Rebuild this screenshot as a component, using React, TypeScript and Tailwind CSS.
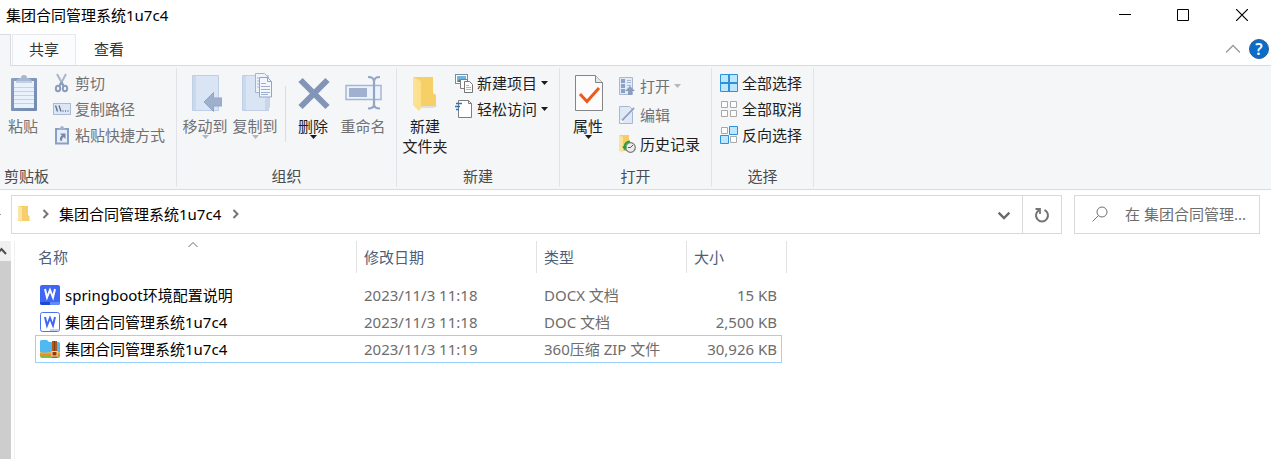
import { clsx } from "clsx"
import type { ReactNode } from "react"

/* ---------- icons ---------- */

function PasteIcon() {
    return (
        <svg width="28" height="40" viewBox="0 0 28 40" fill="none">
            <defs>
                <linearGradient id="board" x1="0" y1="0" x2="1" y2="1">
                    <stop offset="0" stopColor="#8b9fc2" />
                    <stop offset="1" stopColor="#7388b0" />
                </linearGradient>
            </defs>
            <rect x="2" y="6" width="26" height="33" rx="1" fill="url(#board)" />
            <rect x="5" y="9" width="20" height="27" fill="#e9f1fb" />
            <path d="M5 15.500h20M5 19.500h20M5 23.500h20M5 27.500h20M5 31.500h20" stroke="#c3d2e8" />
            <path d="M7 9h16v2H7z" fill="#c3cfe2" />
            <path d="M7 9c1-2 3-3 5-3a3 3 0 1 1 6 0c2 0 4 1 5 3z" fill="#a9b6cf" />
        </svg>
    )
}

function CutIcon() {
    return (
        <svg width="18" height="20" viewBox="0 0 18 20" fill="none">
            <path d="M4 1l6.500 12M13 1L6.500 13" stroke="#a9b5cd" strokeWidth="2" />
            <path d="M8.500 9l2 4M8.500 9l-2 4" stroke="#8b9cbd" strokeWidth="2" />
            <ellipse cx="5" cy="15.500" rx="2.200" ry="2.800" stroke="#8b9cbd" strokeWidth="2" />
            <ellipse cx="12" cy="15.500" rx="2.200" ry="2.800" stroke="#8b9cbd" strokeWidth="2" />
        </svg>
    )
}

function CopyPathIcon() {
    return (
        <svg width="18" height="12" viewBox="0 0 18 12" fill="none">
            <rect x=".5" y=".5" width="17" height="11" fill="#dce7f5" stroke="#a9b9d6" />
            <path d="M2.500 2.500l2 6M6 2.500l2 6" stroke="#5d6f92" strokeWidth="1.300" />
            <path d="M9.500 8h1M12 8h1M14.500 8h1" stroke="#5d6f92" strokeWidth="1.300" />
        </svg>
    )
}

function PasteShortcutIcon() {
    return (
        <svg width="16" height="20" viewBox="0 0 16 20" fill="none">
            <rect x="2" y="4" width="12" height="14.500" fill="#e6eefa" stroke="#8b9fc2" strokeWidth="2" />
            <path d="M4 5c0-2 2-2 2.500-2.500a1.500 1.500 0 0 1 3 0C10 3 12 3 12 5z" fill="#a3b1cb" />
            <path d="M6 8.500h5.500V14l-2-2c-1 .800-1.500 2-1.500 4l-2-.500c-.500-2.500.500-4 1.800-5z" fill="#7488b0" />
        </svg>
    )
}

function MoveToIcon() {
    return (
        <svg width="34" height="40" viewBox="0 0 34 40" fill="none">
            <path d="M4.500 3.500h26v35h-26z" fill="#d9e4f4" stroke="#bfcfe6" />
            <path d="M5 4h3v34H5z" fill="#ccd9ed" />
            <path d="M16 30l9.500-9.500v5.500h8.500v8h-8.500v5.500z" fill="#9fb0cd" stroke="#93a5c5" />
        </svg>
    )
}

function CopyToIcon() {
    return (
        <svg width="34" height="40" viewBox="0 0 34 40" fill="none">
            <path d="M4.500 3.500h26v35h-26z" fill="#d9e4f4" stroke="#bfcfe6" />
            <path d="M5 4h3v34H5z" fill="#ccd9ed" />
            <path d="M27 38V28l2-3h3v10l-2 3z" fill="#c9d6ea" />
            <path d="M17.500 1.500h9l4 4v15h-13z" fill="#eef3fb" stroke="#a3b3d0" />
            <path d="M19 6h3M19 9h3M19 12h3M19 15h3" stroke="#a9b8d3" />
            <path d="M21.500 5.500h8l4 4v15.500h-12z" fill="#f3f7fd" stroke="#93a5c7" />
            <path d="M29.500 5.500v4h4" stroke="#93a5c7" />
            <path d="M23 11.500h5M23 14.500h9M23 17.500h9M23 20.500h9M23 22.500h7" stroke="#9dafcd" />
        </svg>
    )
}

function DeleteIcon() {
    return (
        <svg width="34" height="40" viewBox="0 0 34 40" fill="none">
            <path d="M4.500 8l27 27M31.500 8l-27 27" stroke="#8295b8" strokeWidth="6" />
        </svg>
    )
}

function RenameIcon() {
    return (
        <svg width="38" height="40" viewBox="0 0 38 40" fill="none">
            <rect x="2" y="13.500" width="35" height="14" fill="#edf3fc" stroke="#a5b6d3" strokeWidth="1.500" />
            <rect x="5" y="16" width="18" height="9" fill="#a0b1cf" />
            <path
                d="M24 5c4 0 6 1 6 4.500v23c0 3-2 4-6 4M36 5c-4 0-6 1-6 4.500v23c0 3 2 4 6 4"
                stroke="#93a6c6"
                strokeWidth="2.200"
            />
        </svg>
    )
}

function NewFolderIcon() {
    return (
        <svg width="28" height="40" viewBox="0 0 28 40" fill="none">
            <defs>
                <linearGradient id="flap" x1="0" y1="0" x2="1" y2="0">
                    <stop offset="0" stopColor="#fbe297" />
                    <stop offset="1" stopColor="#fddf86" />
                </linearGradient>
            </defs>
            <path d="M10 34h17l-5 2H10z" fill="#dcdee0" />
            <path d="M3 5h19v16l3 2v11H3z" fill="#f7cf67" />
            <path d="M2 5l8 4v27l-2 3-6-6z" fill="url(#flap)" />
        </svg>
    )
}

function NewItemIcon() {
    return (
        <svg width="18" height="20" viewBox="0 0 18 20" fill="none">
            <rect x=".5" y="1.500" width="12" height="9" fill="#fff" stroke="#7c8b99" />
            <rect x="2" y="3" width="9" height="6" fill="#6db4e2" />
            <path d="M2 9l3-3 4 3z" fill="#3f8a5c" />
            <path d="M5.500 6.500h7v9h-7z" fill="#fff" stroke="#808080" />
            <path d="M9.500 8.500h5l3 3v8h-8z" fill="#fff" stroke="#757575" />
            <path d="M11 12.500h3M11 14.500h5M11 16.500h5" stroke="#dba597" />
        </svg>
    )
}

function EasyAccessIcon() {
    return (
        <svg width="18" height="20" viewBox="0 0 18 20" fill="none">
            <path d="M3.500 1.500h10l3 3v14h-13z" fill="#fff" stroke="#7d7d7d" />
            <path d="M13.500 1.500v3h3" stroke="#7d7d7d" />
            <path d="M1 4.500h6M0 7.500h5M1 10.500h3" stroke="#2f73b8" strokeWidth="1.300" />
        </svg>
    )
}

function PropertiesIcon() {
    return (
        <svg width="30" height="40" viewBox="0 0 30 40" fill="none">
            <path d="M2.500 3.500h20l7 7v28h-27z" fill="#fcfcfc" stroke="#858585" />
            <path d="M22.500 3.500v7h7" fill="#e6e6e6" stroke="#858585" />
            <path d="M7 22l7 7.500L26 16" stroke="#ee5a1c" strokeWidth="3" />
        </svg>
    )
}

function OpenIcon() {
    return (
        <svg width="18" height="20" viewBox="0 0 18 20" fill="none">
            <path d="M1.500 1.500h13v17h-13z" fill="#e1eaf7" stroke="#a9b8d2" />
            <path d="M3 3h4v4H3zM3 8h4v4H3zM3 13h4v4H3z" fill="#8ea1c4" />
            <path d="M9 4.500h4M9 6.500h4M9 9.500h4" stroke="#a9b8d2" />
            <path d="M12 10l5 5h-3v4h-4v-4H7z" fill="#8b9dbf" />
        </svg>
    )
}

function EditIcon() {
    return (
        <svg width="18" height="20" viewBox="0 0 18 20" fill="none">
            <path d="M1.500 1.500h10l3 3v14h-13z" fill="#dfe8f5" stroke="#a9b8d2" />
            <path d="M3 17L14 5" stroke="#fff" strokeWidth="3" />
            <path d="M4 15.500L16 3" stroke="#93a5c5" strokeWidth="2" />
        </svg>
    )
}

function HistoryIcon() {
    return (
        <svg width="18" height="20" viewBox="0 0 18 20" fill="none">
            <path d="M1 1h10v16H1z" fill="#f6cd65" />
            <path d="M1 1l4 2v14l-1 2-3-3z" fill="#fce29a" />
            <circle cx="12.500" cy="13.500" r="4.800" fill="#ececec" stroke="#777" strokeWidth="1.200" />
            <path d="M12.500 13.500L15 11M12.500 13.500H10" stroke="#555" />
            <path d="M12 7.500C9 7.500 6.500 9.500 6.500 13" stroke="#23a03a" strokeWidth="2" />
            <path d="M4 12.500h5l-2 4z" fill="#23a03a" />
        </svg>
    )
}

function SelectAllIcon() {
    return (
        <svg width="18" height="18" viewBox="0 0 18 18" fill="#bfe6ff" stroke="#2e91dc">
            <path d="M.5 .5h8v8h-8zM9.500 .5h8v8h-8zM.5 9.500h8v8h-8zM9.500 9.500h8v8h-8z" />
            <path d="M9 0v18M0 9h18" strokeWidth="2" />
        </svg>
    )
}

function SelectNoneIcon() {
    return (
        <svg width="18" height="18" viewBox="0 0 18 18" fill="#fdfdfd" stroke="#a8a8a8">
            <path d="M1.500 1.500h6v6h-6zM10.500 1.500h6v6h-6zM1.500 10.500h6v6h-6zM10.500 10.500h6v6h-6z" />
        </svg>
    )
}

function InvertIcon() {
    return (
        <svg width="18" height="18" viewBox="0 0 18 18">
            <path d="M1.500 1.500h6v6h-6zM10.500 10.500h6v6h-6z" fill="#fdfdfd" stroke="#a8a8a8" />
            <path d="M9.500 .5h8v8h-8zM.5 9.500h8v8h-8z" fill="#bfe6ff" stroke="#2e91dc" />
        </svg>
    )
}

function DocxIcon() {
    return (
        <svg width="20" height="20" viewBox="0 0 20 20" fill="none">
            <rect width="20" height="20" rx="2" fill="#3f66f4" />
            <path d="M0 17h10v3H2a2 2 0 0 1-2-2z" fill="#1c49d6" />
            <path d="M10 17h10v1a2 2 0 0 1-2 2h-8z" fill="#5f8bff" />
            <path d="M5 4l2 8.500L10 5l3 7.500L15 4" stroke="#fff" strokeWidth="2" />
        </svg>
    )
}

function DocIcon() {
    return (
        <svg width="20" height="20" viewBox="0 0 20 20" fill="none">
            <rect x=".5" y=".5" width="19" height="19" rx="2" fill="#fff" stroke="#4b72ee" />
            <path d="M10 17h9v1a1 1 0 0 1-1 1h-8z" fill="#c3d0f7" />
            <path d="M5 5l2 8.500L10 6l3 7.500L15 5" stroke="#3f66f4" strokeWidth="2" />
        </svg>
    )
}

function ZipIcon() {
    return (
        <svg width="20" height="20" viewBox="0 0 20 20" fill="none">
            <path d="M0 2.500A1.500 1.500 0 0 1 1.500 1H7l2 2h9.500A1.500 1.500 0 0 1 20 4.500V15H0z" fill="#4fb9f2" />
            <path d="M0 13c5 2 12-1 20 0v3H0z" fill="#fbb437" />
            <path d="M0 15.500h20V17a2 2 0 0 1-2 2H2a2 2 0 0 1-2-2z" fill="#7ac143" />
            <path d="M0 14.500h20v2H0z" fill="#f28c1e" />
            <path d="M12 2h5v17h-5z" fill="#b0581b" />
            <path d="M14.500 2v10" stroke="#8a3e0e" />
            <rect x="12" y="12.500" width="5" height="4.500" fill="#8a3e0e" stroke="#f5dca9" />
        </svg>
    )
}

function SmallFolderIcon() {
    return (
        <svg width="14" height="18" viewBox="0 0 14 18" fill="none">
            <path d="M1 1h10v9l1.500 1v5H1z" fill="#f6cf6c" />
            <path d="M1 1l4 1.500V15l-1 2.500L1 15z" fill="#fce5a3" />
        </svg>
    )
}

interface ChevronProps {
    d: string
    size?: number
    color?: string
    width?: number
}

function Chevron({ d, size = 10, color = "#6b6b6b", width = 2 }: ChevronProps) {
    return (
        <svg width={size} height={size} viewBox="0 0 10 10" fill="none" stroke={color} strokeWidth={width} className="shrink-0">
            <path d={d} />
        </svg>
    )
}

function Caret({ muted }: { muted?: boolean }) {
    return (
        <svg width="7" height="4" viewBox="0 0 7 4" className={clsx("shrink-0", muted ? "fill-[#b5b7ba]" : "fill-[#1a1a1a]")}>
            <path d="M0 0h7L3.500 4z" />
        </svg>
    )
}

/* ---------- ribbon ---------- */

interface ButtonProps {
    icon: ReactNode
    label: ReactNode
    disabled?: boolean
    caret?: boolean
}

function BigButton({ icon, label, disabled, caret }: ButtonProps) {
    return (
        <button
            type="button"
            disabled={disabled}
            className={clsx(
                "flex w-[50px] shrink-0 flex-col items-center pt-[2px] leading-5 whitespace-nowrap",
                disabled ? "text-[#707174]" : "text-[#1e1e1e]",
            )}
        >
            <span className="mb-1 flex h-10">{icon}</span>
            <span className="-mb-px">{label}</span>
            {caret && <Caret muted={disabled} />}
        </button>
    )
}

function SmallButton({ icon, label, disabled, caret, tall }: ButtonProps & { tall?: boolean }) {
    return (
        <button
            type="button"
            disabled={disabled}
            className={clsx(
                "flex items-center gap-1 whitespace-nowrap",
                tall ? "h-[29px]" : "h-[26px]",
                disabled ? "text-[#707174]" : "text-[#1e1e1e]",
            )}
        >
            <span className="flex w-[18px] shrink-0 justify-center">{icon}</span>
            <span>{label}</span>
            {caret && <Caret muted={disabled} />}
        </button>
    )
}

function Group({ title, className, children }: { title: string; className: string; children: ReactNode }) {
    return (
        <section
            aria-label={title}
            className={clsx("my-[2px] flex shrink-0 flex-col justify-between border-r border-[#e1e3e6]", className)}
        >
            <div className="flex items-start pt-[2px] pl-[3px]">{children}</div>
            <h2 className="pb-px text-center leading-5 text-[#4a4b4d]">{title}</h2>
        </section>
    )
}

function Ribbon() {
    return (
        <div className="flex h-[124px] border-b border-[#dadbdc] bg-[#f5f6f8]">
            <Group title="剪贴板" className="w-[177px] [&>h2]:pl-1 [&>h2]:text-left">
                {/* the group continues past the left edge of the window */}
                <div className="-ml-[5px] pr-[5px]">
                    <BigButton icon={<PasteIcon />} label="粘贴" disabled />
                </div>
                <div>
                    <SmallButton icon={<CutIcon />} label="剪切" disabled />
                    <SmallButton icon={<CopyPathIcon />} label="复制路径" disabled />
                    <SmallButton icon={<PasteShortcutIcon />} label="粘贴快捷方式" disabled />
                </div>
            </Group>
            <Group title="组织" className="w-[220px]">
                <BigButton icon={<MoveToIcon />} label="移动到" disabled caret />
                <BigButton icon={<CopyToIcon />} label="复制到" disabled caret />
                <div className="mt-4 mr-[2px] ml-[5px] h-14 w-px shrink-0 bg-[#dcdee1]" />
                <BigButton icon={<DeleteIcon />} label="删除" caret />
                <BigButton icon={<RenameIcon />} label="重命名" disabled />
            </Group>
            <Group title="新建" className="w-[163px]">
                <BigButton
                    icon={<NewFolderIcon />}
                    label={
                        <>
                            新建
                            <br />
                            文件夹
                        </>
                    }
                />
                <div className="pl-[5px]">
                    <SmallButton icon={<NewItemIcon />} label="新建项目" caret />
                    <SmallButton icon={<EasyAccessIcon />} label="轻松访问" caret />
                </div>
            </Group>
            <Group title="打开" className="w-[152px]">
                <BigButton icon={<PropertiesIcon />} label="属性" caret />
                <div className="pt-px pl-[5px]">
                    <SmallButton icon={<OpenIcon />} label="打开" disabled caret tall />
                    <SmallButton icon={<EditIcon />} label="编辑" disabled tall />
                    <SmallButton icon={<HistoryIcon />} label="历史记录" tall />
                </div>
            </Group>
            <Group title="选择" className="w-[102px]">
                <div className="pl-[5px]">
                    <SmallButton icon={<SelectAllIcon />} label="全部选择" />
                    <SmallButton icon={<SelectNoneIcon />} label="全部取消" />
                    <SmallButton icon={<InvertIcon />} label="反向选择" />
                </div>
            </Group>
        </div>
    )
}

/* ---------- window chrome ---------- */

function TitleBar() {
    return (
        <header className="flex h-[34px] items-start">
            <h1 className="flex-1 pl-[6px] leading-[30px] text-black">集团合同管理系统1u7c4</h1>
            <button type="button" aria-label="最小化" className="flex h-[30px] w-[58px] items-center justify-center">
                <svg width="12" height="12" stroke="#000" fill="none">
                    <path d="M0 5.500h12" />
                </svg>
            </button>
            <button type="button" aria-label="最大化" className="flex h-[30px] w-[58px] items-center justify-center">
                <svg width="12" height="12" stroke="#000" fill="none">
                    <path d="M.5 .5h11v11H.5z" />
                </svg>
            </button>
            <button type="button" aria-label="关闭" className="flex h-[30px] w-[59px] items-center justify-center pl-px">
                <svg width="12" height="12" stroke="#000" fill="none">
                    <path d="M0 0l12 12M12 0L0 12" strokeWidth="1.200" />
                </svg>
            </button>
        </header>
    )
}

function TabBar() {
    return (
        <nav className="flex h-8 items-stretch border-b border-[#dadbdc] text-[#333]">
            <div className="-mb-px w-[11px] border-t border-r border-[#dadbdc] bg-[#f5f6f8]" />
            <button type="button" className="ml-px w-16 border border-b-0 border-[#e8e9ee] bg-[#fbfcfe] pb-[2px]">
                共享
            </button>
            <button type="button" className="w-[66px] pb-px">
                查看
            </button>
            <div className="ml-auto flex items-center gap-[9px] pr-[2px] pb-[2px]">
                <button type="button" aria-label="最小化功能区">
                    <Chevron d="M0 7.500l5-5 5 5" size={14} color="#9a9a9a" width={1} />
                </button>
                <button
                    type="button"
                    aria-label="帮助"
                    className="flex size-5 items-center justify-center rounded-full border border-[#2b5f92] bg-[#0a6ccb] text-base leading-4 font-semibold text-white"
                >
                    ?
                </button>
            </div>
        </nav>
    )
}

function AddressBar() {
    return (
        <div className="flex pt-[5px] pr-[11px]">
            <div className="flex w-[11px] shrink-0 items-center">
                <span className="h-px w-px bg-[#999]" />
            </div>
            <div className="flex h-[39px] flex-1 items-stretch border border-[#d9d9d9]">
                <div className="flex flex-1 items-center pb-px pl-[5px]">
                    <SmallFolderIcon />
                    <span className="ml-[10px] flex">
                        <Chevron d="M2.500 1l4 4-4 4" color="#757575" />
                    </span>
                    <button type="button" className="mr-[10px] ml-2 text-black">
                        集团合同管理系统1u7c4
                    </button>
                    <Chevron d="M2.500 1l4 4-4 4" color="#757575" />
                </div>
                <button type="button" aria-label="历史位置" className="flex w-9 items-center justify-center">
                    <Chevron d="M.5 3l4.500 4.500L9.500 3" size={12} />
                </button>
                <button type="button" aria-label="刷新" className="flex w-[39px] items-center justify-center border-l border-[#d9d9d9]">
                    <svg width="16" height="16" viewBox="0 0 16 16" fill="none" stroke="#757575" strokeWidth="2">
                        <path d="M10.500 3a6 6 0 1 1-5 0" />
                        <path d="M1.500 2H6v5" strokeWidth="1.800" />
                    </svg>
                </button>
            </div>
            <label className="ml-3 flex h-[39px] w-[186px] items-center border border-[#d9d9d9] pb-px pl-[17px]">
                <svg width="16" height="16" viewBox="0 0 16 16" fill="none" stroke="#707070" className="shrink-0">
                    <circle cx="10" cy="6" r="5" />
                    <path d="M6.500 9.500L.5 15.500" />
                </svg>
                <input
                    type="text"
                    aria-label="搜索"
                    placeholder="在 集团合同管理..."
                    className="ml-[17px] w-0 flex-1 outline-none placeholder:text-[#6d6d6d]"
                />
            </label>
        </div>
    )
}

/* ---------- file list ---------- */

const files = [
    { name: "springboot环境配置说明", date: "2023/11/3 11:18", type: "DOCX 文档", size: "15 KB", icon: <DocxIcon />, focused: false },
    { name: "集团合同管理系统1u7c4", date: "2023/11/3 11:18", type: "DOC 文档", size: "2,500 KB", icon: <DocIcon />, focused: false },
    { name: "集团合同管理系统1u7c4", date: "2023/11/3 11:19", type: "360压缩 ZIP 文件", size: "30,926 KB", icon: <ZipIcon />, focused: true },
]

function FileList() {
    return (
        <table className="w-[752px] table-fixed border-separate border-spacing-0 self-start text-left whitespace-nowrap">
            <colgroup>
                <col className="w-[322px]" />
                <col className="w-[180px]" />
                <col className="w-[150px]" />
                <col className="w-[100px]" />
            </colgroup>
            <thead className="text-[#4c607a]">
                <tr className="h-8">
                    <th aria-sort="ascending" className="relative border-r border-[#e2e2e2] pl-[3px] font-normal">
                        名称
                        <span className="absolute -top-px left-[153px]">
                            <Chevron d="M.5 7L5 2.500 9.500 7" color="#6b6b6b" width={1} />
                        </span>
                    </th>
                    <th className="border-r border-[#e2e2e2] pl-[7px] font-normal">修改日期</th>
                    <th className="border-r border-[#e2e2e2] pl-[7px] font-normal">类型</th>
                    <th className="border-r border-[#e2e2e2] pl-[7px] font-normal">大小</th>
                </tr>
            </thead>
            <tbody className="text-[#6d6d6d] before:block before:h-2">
                {files.map((file) => {
                    const cell = clsx(
                        "flex items-center border-y",
                        file.focused ? "h-7 border-[#99d1ff]" : "h-[27px] border-transparent",
                    )
                    return (
                        <tr key={file.type}>
                            <td className="p-0">
                                <div className={clsx(cell, "gap-[5px] border-l pl-1 text-black")}>
                                    {file.icon}
                                    {file.name}
                                </div>
                            </td>
                            <td className="p-0">
                                <div className={clsx(cell, "pl-[7px]")}>{file.date}</div>
                            </td>
                            <td className="p-0">
                                <div className={clsx(cell, "pl-[7px]")}>{file.type}</div>
                            </td>
                            <td className="py-0 pr-[5px] pl-0">
                                <div className={clsx(cell, "justify-end border-r pr-1")}>{file.size}</div>
                            </td>
                        </tr>
                    )
                })}
            </tbody>
        </table>
    )
}

export default function App() {
    return (
        <div className="flex min-h-screen flex-col overflow-hidden bg-white font-['Noto_Sans','Noto_Sans_CJK_SC',sans-serif] text-[15px] leading-5">
            <TitleBar />
            <TabBar />
            <Ribbon />
            <AddressBar />
            <main className="mt-[7px] flex flex-1">
                <div className="flex w-[11px] shrink-0 flex-col overflow-hidden bg-[#f0f0f0]">
                    <div className="flex h-5 items-center">
                        <svg width="7" height="8" viewBox="0 0 7 8" fill="none" stroke="#505050" strokeWidth="2">
                            <path d="M-3 7l4.500-5L6 7" />
                        </svg>
                    </div>
                    <div className="w-full flex-1 bg-[#cdcdcd]" />
                </div>
                <div className="mr-5 ml-[3px] w-px shrink-0 bg-[#f0f0f0]" />
                <FileList />
            </main>
        </div>
    )
}
